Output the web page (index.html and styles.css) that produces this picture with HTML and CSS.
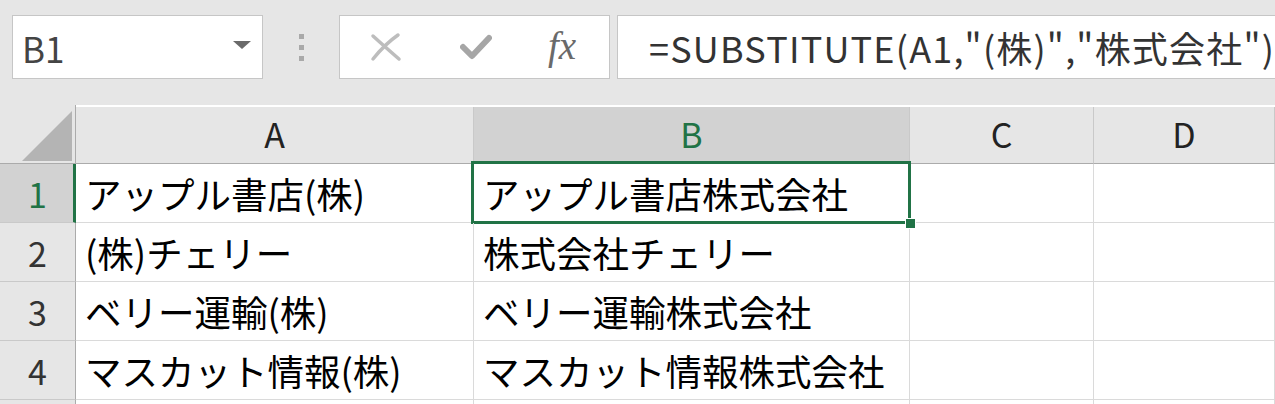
FILE: index.html
```html
<!DOCTYPE html>
<html lang="ja">
<head>
    <meta charset="UTF-8">
    <meta name="viewport" content="width=device-width, initial-scale=1.0">
    <title>SUBSTITUTE</title>
    <link rel="stylesheet" href="styles.css">
</head>
<body>
    <div class="topbar">
        <div class="namebox">
            <span>B1</span>
            <span class="drop"></span>
        </div>
        <div class="grip"><i></i><i></i><i></i></div>
        <div class="fxbuttons">
            <svg class="ico" width="32" height="30" viewBox="0 0 32 30">
                <path d="M3 4 Q14 14 29 27" stroke="#bdbdbd" stroke-width="3.5" fill="none" stroke-linecap="round"/>
                <path d="M28 3 Q15 12 3 27" stroke="#bdbdbd" stroke-width="3.5" fill="none" stroke-linecap="round"/>
            </svg>
            <svg class="ico" width="32" height="28" viewBox="0 0 32 28">
                <path d="M3 14 L12 23 L29 5" stroke="#a6a6a6" stroke-width="6" fill="none" stroke-linecap="round" stroke-linejoin="round"/>
            </svg>
            <span class="fx">fx</span>
        </div>
        <div class="formula">=SUBSTITUTE(A1,"(株)","株式会社")</div>
    </div>

    <div class="sheet">
        <div class="corner"><span class="tri"></span></div>
        <div class="ch">A</div>
        <div class="ch sel">B</div>
        <div class="ch">C</div>
        <div class="ch">D</div>

        <div class="rh sel">1</div>
        <div class="cell">アップル書店(株)</div>
        <div class="cell active">アップル書店株式会社</div>
        <div class="cell"></div>
        <div class="cell"></div>

        <div class="rh">2</div>
        <div class="cell">(株)チェリー</div>
        <div class="cell">株式会社チェリー</div>
        <div class="cell"></div>
        <div class="cell"></div>

        <div class="rh">3</div>
        <div class="cell">ベリー運輸(株)</div>
        <div class="cell">ベリー運輸株式会社</div>
        <div class="cell"></div>
        <div class="cell"></div>

        <div class="rh">4</div>
        <div class="cell">マスカット情報(株)</div>
        <div class="cell">マスカット情報株式会社</div>
        <div class="cell"></div>
        <div class="cell"></div>

        <div class="rh"></div>
        <div class="cell"></div>
        <div class="cell"></div>
        <div class="cell"></div>
        <div class="cell"></div>
    </div>
</body>
</html>
```

FILE: styles.css
```css
html, body {
    height: 404px;
    overflow: hidden;
}
body {
    margin: 0;
    background: #ffffff;
    font-family: "Noto Sans CJK JP", "Noto Sans", sans-serif;
    color: #000000;
}

/* formula bar */
.topbar {
    height: 105px;
    background: #e6e6e6;
    display: flex;
    align-items: flex-start;
    padding-top: 15px;
    box-sizing: border-box;
}
.namebox, .grip, .fxbuttons {
    flex-shrink: 0;
}
.namebox {
    margin-left: 12px;
    width: 251px;
    height: 64px;
    box-sizing: border-box;
    background: #ffffff;
    border: 1px solid #c6c6c6;
    display: flex;
    align-items: center;
    justify-content: space-between;
    padding: 0 11px 0 9px;
    font-size: 35px;
    color: #444444;
    line-height: 1;
}
.namebox .drop {
    width: 0;
    height: 0;
    border-left: 9px solid transparent;
    border-right: 9px solid transparent;
    border-top: 8px solid #6a6a6a;
    margin-top: -4px;
}
.grip {
    width: 76px;
    height: 64px;
    display: flex;
    flex-direction: column;
    align-items: center;
    justify-content: center;
    gap: 6px;
    padding-left: 1px;
    box-sizing: border-box;
}
.grip i {
    width: 5px;
    height: 5px;
    background: #a9a9a9;
}
.fxbuttons {
    width: 271px;
    height: 64px;
    box-sizing: border-box;
    background: #ffffff;
    border: 1px solid #c6c6c6;
    display: flex;
    align-items: center;
    padding-left: 30px;
    gap: 58px;
}
.fx {
    font-family: "Liberation Serif", serif;
    font-style: italic;
    font-size: 39px;
    color: #6a6a6a;
    line-height: 1;
    margin-left: -2px;
    margin-top: -4px;
}
.formula {
    flex: 1;
    min-width: 0;
    margin-left: 7px;
    height: 64px;
    box-sizing: border-box;
    background: #ffffff;
    border: 1px solid #c6c6c6;
    border-right: none;
    padding-left: 31px;
    display: flex;
    align-items: center;
    font-size: 36px;
    letter-spacing: 1.2px;
    color: #333333;
    white-space: nowrap;
}

/* grid */
.sheet {
    display: grid;
    grid-template-columns: 76px 398px 436px 184px 1fr;
    grid-template-rows: 59px;
    grid-auto-rows: 59px;
    height: 299px;
    overflow: hidden;
}
.corner, .ch, .rh {
    background: #e6e6e6;
    box-sizing: border-box;
}
.corner {
    border-right: 1px solid #ababab;
    border-bottom: 1px solid #ababab;
    position: relative;
}
.corner .tri {
    position: absolute;
    right: 3px;
    bottom: 2px;
    width: 0;
    height: 0;
    border-left: 50px solid transparent;
    border-bottom: 50px solid #b4b4b4;
}
.ch {
    border-right: 1px solid #c9c9c9;
    border-bottom: 1px solid #ababab;
    margin-top: 2px;
    display: flex;
    align-items: center;
    justify-content: center;
    font-size: 34px;
    color: #222222;
    padding-bottom: 4px;
}
.ch.sel {
    background: #d2d2d2;
    color: #217346;
}
.rh {
    border-right: 1px solid #ababab;
    border-bottom: 1px solid #c9c9c9;
    display: flex;
    align-items: center;
    justify-content: center;
    font-size: 34px;
    color: #333333;
}
.rh.sel {
    background: #d2d2d2;
    color: #217346;
    border-right: 3px solid #217346;
    padding-left: 2px;
}
.cell {
    border-right: 1px solid #dadada;
    border-bottom: 1px solid #dadada;
    box-sizing: border-box;
    display: flex;
    align-items: center;
    padding-left: 9px;
    font-size: 36.5px;
    white-space: nowrap;
    position: relative;
}
.cell.active::after {
    content: "";
    position: absolute;
    top: -3px;
    left: -3px;
    right: -2px;
    bottom: -2px;
    border: 3px solid #217346;
}
.cell.active::before {
    content: "";
    position: absolute;
    right: -6px;
    bottom: -6px;
    width: 9px;
    height: 9px;
    background: #217346;
    outline: 1px solid #ffffff;
    z-index: 2;
}
```
